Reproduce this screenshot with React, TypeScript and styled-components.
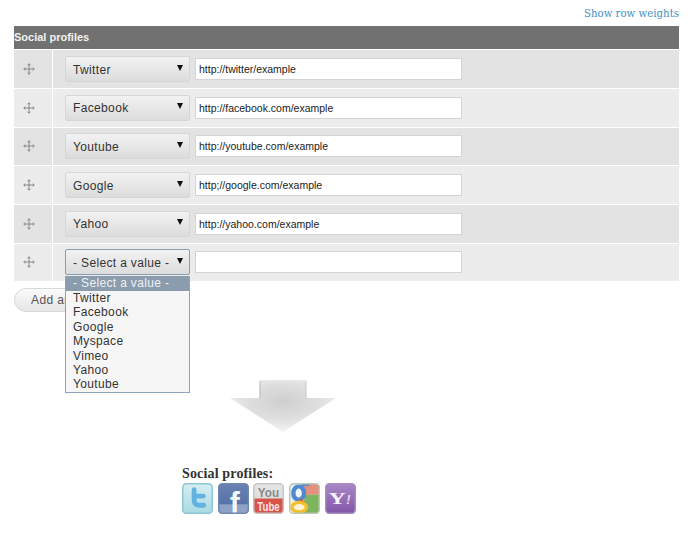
import React from 'react'
import styled, { createGlobalStyle } from 'styled-components'

const GlobalStyle = createGlobalStyle`
  html, body { margin: 0; padding: 0; background: #fff; }
  body { font-family: "Liberation Sans", Arial, sans-serif; color: #333; }
`

const Page = styled.div`
  width: 700px;
  height: 536px;
  overflow: hidden;
  box-sizing: border-box;
  padding: 7px 21px 0 14px;
`

const WeightsLine = styled.div`
  display: flex;
  justify-content: flex-end;
  height: 19px;
`

const WeightsLink = styled.a`
  font-family: "DejaVu Serif", serif;
  font-size: 10.2px;
  line-height: 14px;
  color: #3f8fc4;
`

const TableHead = styled.div`
  height: 24.3px;
  background: #717171;
  color: #f2f2f2;
  font-size: 11px;
  font-weight: bold;
  line-height: 22px;
  box-sizing: border-box;
  border-bottom: 1px solid #fff;
`

const Row = styled.div<{ $even: boolean }>`
  display: grid;
  grid-template-columns: 39px 1fr;
  height: 38.67px;
  box-sizing: border-box;
  border-bottom: 1px solid #fff;
  background: ${p => (p.$even ? '#ececec' : '#e3e3e3')};
`

const HandleCell = styled.div`
  display: flex;
  align-items: center;
  justify-content: center;
  padding-right: 8px;
  border-right: 1px solid #fff;
  color: #808080;
`

const FieldCell = styled.div`
  display: flex;
  align-items: center;
  gap: 5px;
  padding-left: 12px;
  position: relative;
`

const SelectBox = styled.div<{ $open?: boolean }>`
  width: 125px;
  height: 26px;
  box-sizing: border-box;
  display: flex;
  align-items: center;
  justify-content: space-between;
  padding: 1px 6px 0 7px;
  border: 1px solid ${p => (p.$open ? '#8a9cad' : '#d6d6d6')};
  border-radius: 2px;
  background: linear-gradient(#f2f2f2, #dcdcdc);
  font-size: 12px;
  letter-spacing: 0.35px;
  color: #333;
`

const Caret = styled.span`
  width: 0;
  height: 0;
  margin: -4px 0 0;
  border-left: 3.5px solid transparent;
  border-right: 3.5px solid transparent;
  border-top: 6px solid #111;
`

const UrlInput = styled.div`
  width: 267px;
  height: 22px;
  box-sizing: border-box;
  border: 1px solid #d4d4d4;
  background: #fff;
  padding-left: 3px;
  font-size: 10.5px;
  line-height: 20px;
  color: #222;
`

const Menu = styled.div`
  position: absolute;
  z-index: 2;
  left: 12px;
  top: 32.5px;
  width: 125px;
  box-sizing: border-box;
  border: 1px solid #8ca3bd;
  border-top: 0;
  background: #f6f6f6;
  font-size: 12px;
  line-height: 14.4px;
  letter-spacing: 0.35px;
  color: #333;
`

const MenuItem = styled.div<{ $active?: boolean }>`
  padding-left: 7px;
  height: ${p => (p.$active ? '15px' : '14.4px')};
  background: ${p => (p.$active ? '#8a9cad' : 'transparent')};
  color: ${p => (p.$active ? '#eef1f4' : '#333')};
`

const AddButton = styled.div`
  margin-top: 6px;
  width: 130px;
  height: 24px;
  box-sizing: border-box;
  border: 1px solid #d8d8d8;
  border-radius: 12px;
  background: linear-gradient(#fafafa, #e6e6e6);
  padding-left: 16px;
  font-size: 12px;
  line-height: 23px;
  letter-spacing: 0.4px;
  color: #555;
`

const ArrowSlot = styled.div`
  margin: 67.7px 0 0 216px;
  height: 54px;
`

const Profiles = styled.div`
  margin: 32px 0 0 168px;
`

const ProfilesTitle = styled.div`
  font-family: "Liberation Serif", serif;
  font-size: 14px;
  font-weight: bold;
  line-height: 16px;
  letter-spacing: 0.15px;
  color: #333;
`

const IconRow = styled.div`
  display: flex;
  gap: 4.7px;
  margin-top: 1px;
`

const rows = [
  ['Twitter', 'http://twitter/example'],
  ['Facebook', 'http://facebook.com/example'],
  ['Youtube', 'http://youtube.com/example'],
  ['Google', 'http;//google.com/example'],
  ['Yahoo', 'http://yahoo.com/example'],
]

const options = ['Twitter', 'Facebook', 'Google', 'Myspace', 'Vimeo', 'Yahoo', 'Youtube']

function DragHandle() {
  return (
    <svg width="12" height="12" viewBox="0 0 13 13" fill="none" stroke="currentColor">
      <path d="M6.5 1v11M1 6.5h11" strokeWidth="1" />
      <path d="M5 2.500 6.500.8 8 2.500M5 10.500l1.500 1.700 1.500-1.700M2.500 5 .8 6.500 2.500 8M10.500 5l1.700 1.500L10.500 8" strokeWidth="1" />
    </svg>
  )
}

function BigArrow() {
  return (
    <svg width="106" height="53" viewBox="0 0 106 53">
      <defs>
        <radialGradient id="arrowFill" cx="0.5" cy="0.4" r="0.55">
          <stop offset="0" stopColor="#cfcfcf" />
          <stop offset="0.6" stopColor="#dedede" />
          <stop offset="1" stopColor="#efefef" />
        </radialGradient>
      </defs>
      <path d="M30 1h46v17h30L53 52 0 18h30z" fill="url(#arrowFill)" />
      <path d="M30 1v17" stroke="#b5b5b5" strokeWidth="1" />
      <path d="M76 1v17" stroke="#c8c8c8" strokeWidth="1" />
      <path d="M30 .5h46" stroke="#e8e8e8" strokeWidth="1" />
    </svg>
  )
}

function IconFrame({ id, top, bottom, border, children }: { id: string; top: string; bottom: string; border: string; children: React.ReactNode }) {
  return (
    <svg width="31" height="31" viewBox="0 0 32 32" overflow="visible">
      <defs>
        <linearGradient id={id} x1="0" y1="0" x2="0" y2="1">
          <stop offset="0" stopColor={top} />
          <stop offset="1" stopColor={bottom} />
        </linearGradient>
        <clipPath id={`${id}-clip`}>
          <rect x="0.5" y="0.5" width="31" height="31" rx="4" />
        </clipPath>
      </defs>
      <g clipPath={`url(#${id}-clip)`}>
        <rect width="32" height="32" fill={`url(#${id})`} />
        {children}
      </g>
      <rect x="0.750" y="0.750" width="30.500" height="30.500" rx="4" fill="none" stroke={border} strokeWidth="1.500" />
    </svg>
  )
}

function TwitterIcon() {
  return (
    <IconFrame id="tw" top="#d6eff3" bottom="#a9d9e3" border="#8fc4d2">
      <path d="M12.500 7v10.500c0 4 2.500 5.500 6 5.500h4M12.500 13.500h9.500" fill="none" stroke="#62b3e0" strokeWidth="5" strokeLinecap="round" />
    </IconFrame>
  )
}

function FacebookIcon() {
  return (
    <IconFrame id="fb" top="#6a82b2" bottom="#4c6ba5" border="#7287ae">
      <rect y="22" width="32" height="10" fill="#8ea2c6" />
      <text x="12" y="31" fontFamily="'Liberation Sans', sans-serif" fontSize="31" fontWeight="bold" fill="#f4f6fa">f</text>
    </IconFrame>
  )
}

function YoutubeIcon() {
  return (
    <IconFrame id="yt" top="#e6e6e6" bottom="#d6d6d6" border="#c5c5c5">
      <rect x="0" y="16" width="32" height="16" fill="#d9534a" />
      <text x="16" y="14" textAnchor="middle" fontFamily="'Liberation Sans', sans-serif" fontSize="14" fontWeight="bold" fill="#8a8a8a" textLength="22" lengthAdjust="spacingAndGlyphs">You</text>
      <text x="16" y="29" textAnchor="middle" fontFamily="'Liberation Sans', sans-serif" fontSize="14" fontWeight="bold" fill="#f7e6e4" textLength="23" lengthAdjust="spacingAndGlyphs">Tube</text>
    </IconFrame>
  )
}

function GoogleIcon() {
  return (
    <IconFrame id="gg" top="#e4edf5" bottom="#e4edf5" border="#b9c9b4">
      <path d="M13 0h19v12H17z" fill="#e58f7d" />
      <path d="M17 12h15v20H12z" fill="#7fb45f" />
      <path d="M0 18h6l-2 14H0z" fill="#f5f0d8" />
      <ellipse cx="10" cy="10.500" rx="5.500" ry="7" fill="#f3f6fa" stroke="#4f8ad0" strokeWidth="4.500" />
      <path d="M13 2.500c2.500-1 5-1 8-.5" fill="none" stroke="#4f8ad0" strokeWidth="2.500" />
      <path d="M11 17c2.500 1.500 4 3 4 5" fill="none" stroke="#dd5a48" strokeWidth="3" />
      <ellipse cx="10.500" cy="25" rx="7.500" ry="5" fill="#fff4cf" stroke="#f4bf2f" strokeWidth="3.500" />
    </IconFrame>
  )
}

function YahooIcon() {
  return (
    <IconFrame id="yh" top="#a988c6" bottom="#8156a6" border="#a78cc2">
      <text x="3.500" y="22" fontFamily="'Liberation Serif', serif" fontSize="17" fontWeight="bold" fill="#f6f1fa" textLength="18" lengthAdjust="spacingAndGlyphs">Y</text>
      <text x="22" y="22" fontFamily="'Liberation Sans', sans-serif" fontSize="13" fontWeight="bold" fontStyle="italic" fill="#e6dbef">!</text>
    </IconFrame>
  )
}

export default function App() {
  return (
    <>
      <GlobalStyle />
      <Page>
        <WeightsLine>
          <WeightsLink>Show row weights</WeightsLink>
        </WeightsLine>
        <TableHead>Social profiles</TableHead>
        {rows.map(([name, url], i) => (
          <Row key={name} $even={i % 2 === 1}>
            <HandleCell><DragHandle /></HandleCell>
            <FieldCell>
              <SelectBox>{name}<Caret /></SelectBox>
              <UrlInput>{url}</UrlInput>
            </FieldCell>
          </Row>
        ))}
        <Row $even>
          <HandleCell><DragHandle /></HandleCell>
          <FieldCell>
            <SelectBox $open>- Select a value -<Caret /></SelectBox>
            <UrlInput />
            <Menu>
              <MenuItem $active>- Select a value -</MenuItem>
              {options.map(o => <MenuItem key={o}>{o}</MenuItem>)}
            </Menu>
          </FieldCell>
        </Row>
        <AddButton>Add another item</AddButton>
        <ArrowSlot><BigArrow /></ArrowSlot>
        <Profiles>
          <ProfilesTitle>Social profiles:</ProfilesTitle>
          <IconRow>
            <TwitterIcon />
            <FacebookIcon />
            <YoutubeIcon />
            <GoogleIcon />
            <YahooIcon />
          </IconRow>
        </Profiles>
      </Page>
    </>
  )
}
